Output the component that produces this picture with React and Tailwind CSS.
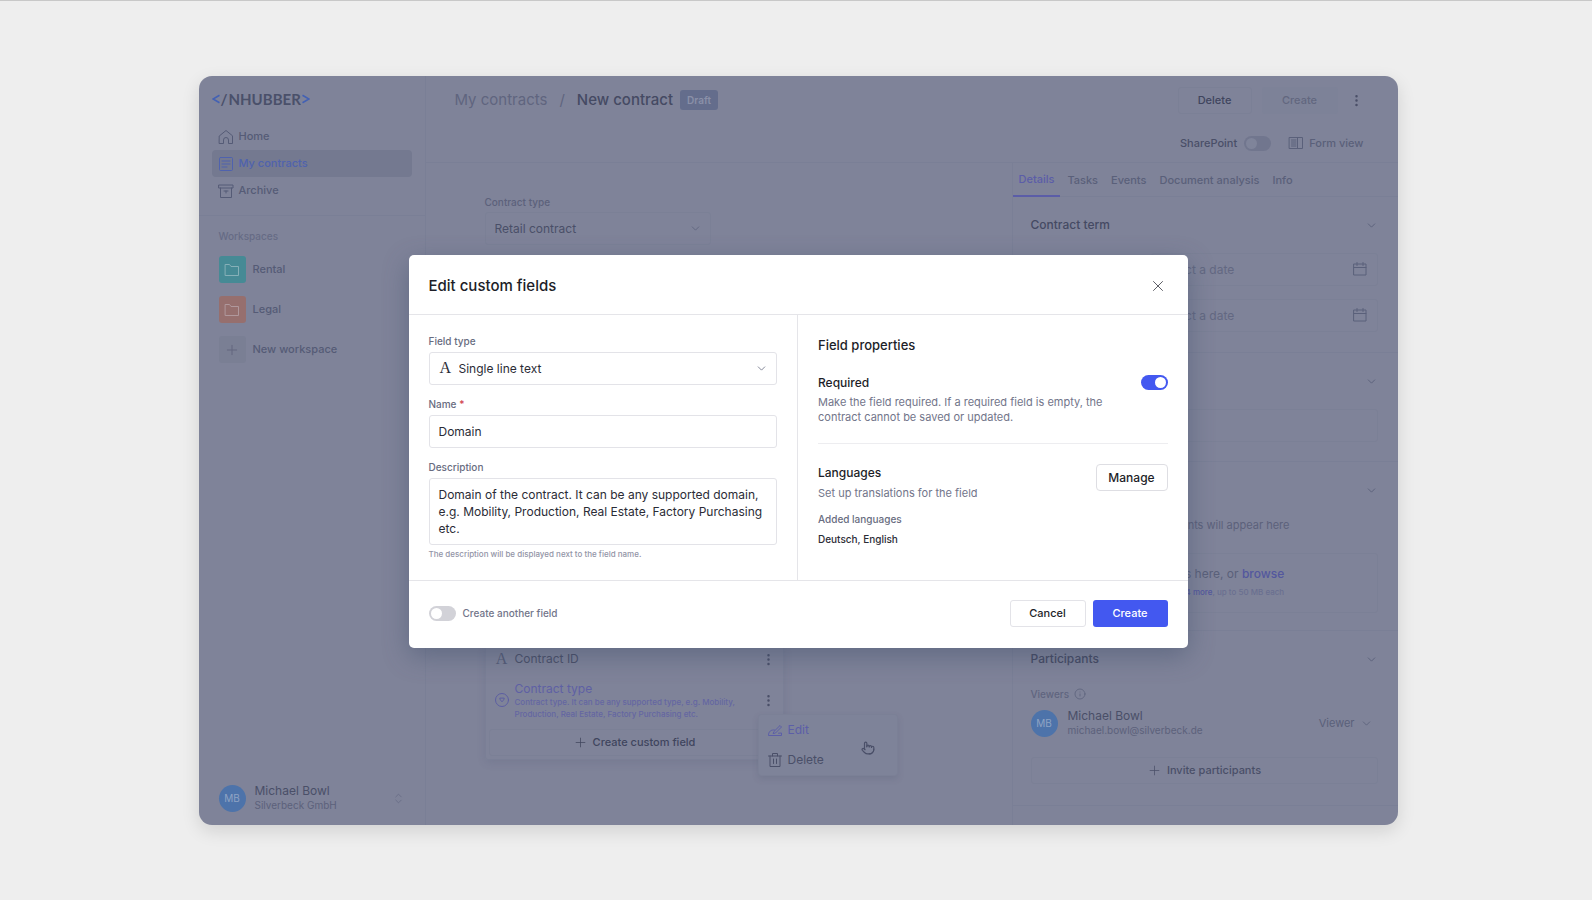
import React from "react";
import { ChevronDown, ChevronsUpDown, Info, MoreVertical, Plus, Pointer, X } from "lucide-react";
import clsx from "clsx";

const svgProps = {
  viewBox: "0 0 16 16",
  fill: "none",
  stroke: "currentColor",
  strokeLinecap: "round",
  strokeLinejoin: "round",
  "aria-hidden": true,
};

function HomeIcon() {
  return (
    <svg {...svgProps} className="size-4">
      <path d="M1.5 6.8 8 1.5l6.5 5.3V14.5H10.5V11a2.5 2.5 0 0 0-5 0v3.5h-4z" />
    </svg>
  );
}

function ContractIcon() {
  return (
    <svg {...svgProps} className="size-4">
      <rect x="1.5" y="1.5" width="13" height="13" rx="1" />
      <path d="M4 5h8M4 8h8M4 11h5" />
    </svg>
  );
}

function ArchiveIcon() {
  return (
    <svg {...svgProps} className="size-4">
      <path d="M1 2h14v3H1zM2.5 5v9.5h11V5M6 8h4M8 8v2" />
    </svg>
  );
}

function FolderIcon() {
  return (
    <svg {...svgProps} className="size-4">
      <path d="M1.5 2.5h4l1.5 2h7.5v9h-13z" />
    </svg>
  );
}

function FormViewIcon() {
  return (
    <svg {...svgProps} className="size-4">
      <rect x="1.5" y="2.5" width="13" height="11" />
      <path d="M9.5 2.5v11M3.5 5H8M3.5 7H8M3.5 9H8M3.5 11H8" />
    </svg>
  );
}

function CalendarIcon() {
  return (
    <svg {...svgProps} className="size-4">
      <path d="M2 3h12v11H2zM2 6.5h12M5 1.5v3M11 1.5v3" />
    </svg>
  );
}

function DropdownTypeIcon() {
  return (
    <svg {...svgProps} className="size-4">
      <circle cx="8" cy="8" r="6.5" />
      <path d="M5.8 6.5c0 1.2 1.2 2 2.2 3.3 1-1.3 2.2-2.1 2.2-3.3z" />
    </svg>
  );
}

function EditIcon() {
  return (
    <svg {...svgProps} className="size-4">
      <path d="M7 9.5 13 3.5l1.5 1.5-6 6-2 .5zM7.5 8C4 7.5 1.5 9.5 1.5 13.5h13V11l-3 .2" />
    </svg>
  );
}

function TrashIcon() {
  return (
    <svg {...svgProps} className="size-4">
      <path d="M1.5 4h13M3 4v10.5h10V4M5.5 4V1.5h5V4M6.5 7v4.5M9.5 7v4.5" />
    </svg>
  );
}

function LetterIcon({ className }) {
  return (
    <span aria-hidden="true" className={clsx("font-['Liberation_Serif',serif] text-base leading-4", className)}>
      A
    </span>
  );
}

function LogoBracket({ flip }) {
  return (
    <svg viewBox="0 0 8 10" fill="none" stroke="#4361b4" strokeWidth="1.6" aria-hidden="true" className="h-[10px] w-2">
      <path d={flip ? "M.5 1.2 7 5 .5 8.8" : "M7.5 1.2 1 5l6.5 3.8"} />
    </svg>
  );
}

function Toggle({ id, muted, ...props }) {
  return (
    <input
      id={id}
      type="checkbox"
      className={clsx(
        "relative h-[15px] w-[27px] shrink-0 appearance-none rounded-full before:absolute before:top-[2px] before:left-[2px] before:size-[11px] before:rounded-full checked:before:left-[14px]",
        muted ? "bg-[#71768e] before:bg-[#7f849a]" : "bg-[#d2d2d8] before:bg-white checked:bg-[#4358f0]"
      )}
      {...props}
    />
  );
}

const navItems = [
  { label: "Home", icon: HomeIcon },
  { label: "My contracts", icon: ContractIcon, active: true },
  { label: "Archive", icon: ArchiveIcon },
];

const workspaces = [
  { label: "Rental", color: "bg-[#468a95] text-[#86b0b8]" },
  { label: "Legal", color: "bg-[#966f6e] text-[#b0989c]" },
];

function Avatar() {
  return (
    <span className="grid size-[27px] shrink-0 place-items-center rounded-full bg-[#4d73aa] text-[10px] text-[#8fa3c4]">
      MB
    </span>
  );
}

function Sidebar() {
  return (
    <aside className="flex w-[227px] shrink-0 flex-col border-r border-[#7a7f96]">
      <a
        href="#home"
        className="mt-[14px] ml-[13px] flex items-center gap-px font-[Lato,sans-serif] text-[15px] leading-[18px] font-bold text-[#4a506a]"
      >
        <LogoBracket />
        <span>/</span>
        <span>NHUBBER</span>
        <LogoBracket flip />
      </a>
      <nav className="mt-[15px] px-[13px]">
        {navItems.map(({ label, icon: Icon, active }) => (
          <a
            key={label}
            href={`#${label}`}
            className={clsx(
              "flex h-[27px] w-[200px] items-center gap-[5px] rounded-sm pl-[6px] text-[11px] font-medium",
              active ? "bg-[#747990] text-[#4f62ae]" : "text-[#555b76]"
            )}
          >
            <Icon />
            {label}
          </a>
        ))}
      </nav>
      <div className="mt-[11px] border-t border-[#7a7f96] px-5 pt-[12px]">
        <h2 className="text-[10px] leading-4 font-medium text-[#666b85]">Workspaces</h2>
        <ul className="mt-[12px] flex flex-col gap-[13px] text-[11px] font-medium text-[#555b76]">
          {workspaces.map(({ label, color }) => (
            <li key={label}>
              <a href={`#${label}`} className="flex items-center gap-[7px]">
                <span className={clsx("grid size-[27px] place-items-center rounded-[3px]", color)}>
                  <FolderIcon />
                </span>
                {label}
              </a>
            </li>
          ))}
          <li>
            <button type="button" className="flex items-center gap-[7px]">
              <span className="grid size-[27px] place-items-center rounded-[3px] bg-[#7a7f94] text-[#62677f]">
                <Plus size={16} strokeWidth={1.5} />
              </span>
              New workspace
            </button>
          </li>
        </ul>
      </div>
      <button type="button" className="mt-auto mb-3 flex items-center gap-[9px] pr-5 pl-5 text-left">
        <Avatar />
        <span className="flex-1 text-[#4a4f68]">
          <span className="block text-xs leading-[15px]">Michael Bowl</span>
          <span className="block text-[10px] leading-[15px] text-[#5c617b]">Silverbeck GmbH</span>
        </span>
        <ChevronsUpDown size={13} strokeWidth={1.5} className="text-[#666b85]" />
      </button>
    </aside>
  );
}

function Header() {
  return (
    <header className="border-b border-[#7a7f96] pr-[34px] pl-[29px]">
      <div className="flex h-12 items-center">
        <h1 className="flex items-center text-[15px] font-medium text-[#454a63]">
          <a href="#contracts" className="font-normal text-[#60657f]">My contracts</a>
          <span className="mx-3 font-normal text-[#60657f]">/</span>
          New contract
        </h1>
        <span className="ml-[7px] rounded-[3px] bg-[#646d8c] px-[7px] text-[10px] leading-5 font-semibold text-[#8a90a8]">
          Draft
        </span>
        <div className="ml-auto flex items-center text-[11px] font-medium">
          <button type="button" className="h-[27px] w-[74px] rounded-[3px] border border-[#7b8096] text-[#40455e]">
            Delete
          </button>
          <button type="button" disabled className="ml-[10px] h-[27px] w-[76px] rounded-[3px] bg-[#7d8298] text-[#62677f]">
            Create
          </button>
          <button type="button" aria-label="More actions" className="ml-[11px] text-[#4a4f68]">
            <MoreVertical size={15} />
          </button>
        </div>
      </div>
      <div className="flex h-[38px] items-center justify-end text-[11px] font-medium">
        <label htmlFor="sharepoint" className="mr-[7px] text-[#4a4f68]">SharePoint</label>
        <Toggle id="sharepoint" muted />
        <button type="button" className="ml-[17px] flex items-center gap-[5px] text-[#5a607a]">
          <FormViewIcon />
          Form view
        </button>
      </div>
    </header>
  );
}

function FieldPicker() {
  return (
    <div className="relative mt-[398px] w-[299px] rounded-[3px] border border-[#7a7f96] shadow-[0_3px_8px_rgba(60,65,95,0.12)]">
      <ul className="text-xs text-[#4a4f68]">
        <li className="flex h-[30px] items-center pr-[7px] pl-2">
          <LetterIcon className="w-4 text-center text-[#555b76]" />
          <span className="ml-[5px] flex-1">Contract ID</span>
          <button type="button" aria-label="Contract ID options"><MoreVertical size={15} /></button>
        </li>
        <li className="flex h-[52px] items-center pr-[7px] pl-2">
          <span className="text-[#5c5ea2]"><DropdownTypeIcon /></span>
          <span className="ml-[5px] flex-1 text-[#5e60a4]">
            <span className="block leading-[15px]">Contract type</span>
            <span className="block text-[8px] leading-[12px] font-medium text-[#6466a2]">
              Contract type. It can be any supported type, e.g. Mobility, Production, Real Estate, Factory Purchasing etc.
            </span>
          </span>
          <button type="button" aria-label="Contract type options"><MoreVertical size={15} /></button>
        </li>
      </ul>
      <button
        type="button"
        className="m-[3px] flex h-[27px] w-[291px] items-center justify-center gap-[5px] rounded-[3px] border border-[#7b8096] text-[11px] font-medium text-[#40455e]"
      >
        <Plus size={15} strokeWidth={1.2} />
        Create custom field
      </button>
      <div className="absolute top-[70px] left-[272px] w-[140px] rounded-[3px] border border-[#7b8096] bg-[#7e8399] text-xs text-[#4a4f68] shadow-[0_3px_6px_rgba(60,65,95,0.15)]">
        <button type="button" className="flex h-[30px] w-full items-center gap-[5px] pl-2 text-[#5c5ea8]">
          <EditIcon />
          Edit
        </button>
        <button type="button" className="flex h-[30px] w-full items-center gap-[5px] pl-2">
          <TrashIcon />
          Delete
        </button>
        <Pointer size={14} strokeWidth={2} className="absolute top-[26px] left-[102px] text-[#4a4f68]" />
      </div>
    </div>
  );
}

function ContractForm() {
  return (
    <section className="min-w-0 flex-1 pl-[59px]">
      <label htmlFor="contract-type" className="mt-[31px] block text-[10px] leading-4 font-medium text-[#5c617b]">
        Contract type
      </label>
      <div className="relative mt-[2px] w-[226px]">
        <select
          id="contract-type"
          className="h-[33px] w-full appearance-none rounded-[3px] border border-[#7b8096] px-[9px] text-xs text-[#4a4f68]"
        >
          <option>Retail contract</option>
        </select>
        <ChevronDown size={13} strokeWidth={1.5} className="pointer-events-none absolute top-[10px] right-[9px] text-[#5c617b]" />
      </div>
      <FieldPicker />
    </section>
  );
}

function Section({ title, className, children }) {
  return (
    <section className={clsx("border-b border-[#7a7f96] pr-5 pl-[18px]", className)}>
      <div className="flex h-[56px] items-center">
        <h2 className="flex-1 text-xs font-medium text-[#454a63]">{title}</h2>
        <button type="button" aria-label="Toggle section" className="text-[#555b76]">
          <ChevronDown size={13} strokeWidth={1.5} />
        </button>
      </div>
      {children}
    </section>
  );
}

function DateInput({ label }) {
  return (
    <div className="relative ml-[120px]">
      <input
        aria-label={label}
        placeholder="Select a date"
        className="block h-[33px] w-full rounded-[3px] border border-[#7b8096] px-[9px] text-xs placeholder:text-[#636882]"
      />
      <span className="absolute top-2 right-[10px] text-[#5a607a]">
        <CalendarIcon />
      </span>
    </div>
  );
}

const tabs = ["Details", "Tasks", "Events", "Document analysis", "Info"];

function DetailsPanel() {
  return (
    <aside className="w-[386px] shrink-0 border-l border-[#7a7f96]">
      <nav className="flex h-[34px] gap-px border-b border-[#7a7f96] text-[11px] font-medium text-[#5a607a]">
        {tabs.map((tab, i) => (
          <a
            key={tab}
            href={`#${tab}`}
            className={clsx("flex h-[34px] items-center px-[6px]", i === 0 && "border-b-2 border-[#5b5da8] text-[#5b5da8]")}
          >
            {tab}
          </a>
        ))}
      </nav>
      <Section title="Contract term" className="h-[156px]">
        <div className="flex flex-col gap-[13px]">
          <DateInput label="Start date" />
          <DateInput label="End date" />
        </div>
      </Section>
      <Section className="h-[109px]">
        <input aria-label="Tags" className="block h-[33px] w-full rounded-[3px] border border-[#7b8096] px-[9px]" />
      </Section>
      <Section className="h-[169px]">
        <p className="text-center text-[11px] leading-[14px] text-[#5c617b]">Your documents will appear here</p>
        <div className="mt-[21px] rounded-[3px] border border-[#7b8096] py-3 text-center">
          <p className="text-xs leading-4 text-[#5a607a]">
            Upload files here, or <button type="button" className="font-medium text-[#53579e]">browse</button>
          </p>
          <p className="mt-[2px] text-[8px] leading-4 font-medium text-[#6a6f90]">
            PDF, DOCX and <span className="text-[#53579e]">4 more</span>, up to 50 MB each
          </p>
        </div>
      </Section>
      <Section title="Participants" className="h-[175px]">
        <h3 className="flex items-center gap-[5px] text-[10px] leading-[14px] font-medium text-[#60657f]">
          Viewers
          <Info size={12} strokeWidth={1.8} />
        </h3>
        <div className="mt-[7px] flex items-center">
          <Avatar />
          <div className="ml-[10px] flex-1">
            <p className="text-xs leading-[15px] text-[#4a4f68]">Michael Bowl</p>
            <p className="text-[10px] leading-[15px] text-[#5c617b]">michael.bowl@silverbeck.de</p>
          </div>
          <button type="button" className="mr-[5px] flex items-center gap-[5px] text-[11px] text-[#5a607a]">
            Viewer
            <ChevronDown size={13} strokeWidth={1.5} />
          </button>
        </div>
        <button
          type="button"
          className="mt-[19px] flex h-[27px] w-full items-center justify-center gap-[5px] rounded-[3px] border border-[#7b8096] text-[11px] font-medium text-[#4a4f68]"
        >
          <Plus size={15} strokeWidth={1.2} />
          Invite participants
        </button>
      </Section>
    </aside>
  );
}

const labelClass = "block text-[10px] leading-[15px] font-medium text-[#686c80]";
const fieldClass = "block w-full rounded-[3px] border border-[#e3e3e8] bg-white text-xs text-[#2b2c36]";

function EditFieldsModal() {
  return (
    <div
      role="dialog"
      aria-labelledby="modal-title"
      className="w-[779px] rounded-[5px] bg-white shadow-[0_8px_26px_rgba(60,75,105,0.45)]"
    >
      <div className="flex h-[60px] items-center justify-between border-b border-[#e5e5e9] px-5 pt-[2px]">
        <h2 id="modal-title" className="text-[15px] leading-5 font-medium text-[#1d1e28]">Edit custom fields</h2>
        <button type="button" aria-label="Close" className="mr-px text-[#4b4c55]">
          <X size={18} strokeWidth={1.2} />
        </button>
      </div>
      <div className="grid grid-cols-2 border-b border-[#e5e5e9]">
        <div className="border-r border-[#e5e5e9] px-5 pt-[19px] pb-[19px]">
          <label htmlFor="field-type" className={labelClass}>Field type</label>
          <div className="relative mt-[3px]">
            <select id="field-type" className={clsx(fieldClass, "h-[33px] appearance-none pl-[29px]")}>
              <option>Single line text</option>
            </select>
            <LetterIcon className="absolute top-2 left-[11px] text-[#2b2c36]" />
            <ChevronDown size={13} strokeWidth={1.5} className="pointer-events-none absolute top-[10px] right-[9px] text-[#686c80]" />
          </div>
          <label htmlFor="name" className={clsx(labelClass, "mt-3")}>
            Name <span className="text-[#d0404c]">*</span>
          </label>
          <input id="name" defaultValue="Domain" className={clsx(fieldClass, "mt-[3px] h-[33px] px-[9px]")} />
          <label htmlFor="description" className={clsx(labelClass, "mt-3")}>Description</label>
          <textarea
            id="description"
            rows={3}
            defaultValue="Domain of the contract. It can be any supported domain, e.g. Mobility, Production, Real Estate, Factory Purchasing etc."
            className={clsx(fieldClass, "mt-[3px] resize-none px-[9px] py-[7px] leading-[17px]")}
          />
          <p className="mt-[2px] text-[8px] leading-[14px] font-medium text-[#9294a6]">
            The description will be displayed next to the field name.
          </p>
        </div>
        <div className="px-5 pt-[21px]">
          <h3 className="text-[13px] leading-[18px] font-medium text-[#1d1e28]">Field properties</h3>
          <div className="mt-[21px] flex items-start justify-between border-b border-[#ededf0] pb-[18px]">
            <div>
              <label htmlFor="required" className="block text-xs leading-4 font-medium text-[#1d1e28]">Required</label>
              <p className="mt-1 max-w-[290px] text-[11px] leading-[15px] text-[#72758a]">
                Make the field required. If a required field is empty, the contract cannot be saved or updated.
              </p>
            </div>
            <Toggle id="required" defaultChecked />
          </div>
          <div className="mt-[20px] flex items-start justify-between">
            <div>
              <h4 className="text-xs leading-[18px] font-medium text-[#1d1e28]">Languages</h4>
              <p className="mt-[2px] text-[11px] leading-[18px] text-[#72758a]">Set up translations for the field</p>
            </div>
            <button type="button" className="h-[27px] w-[72px] rounded-[4px] border border-[#dedee3] text-xs font-medium text-[#1d1e28]">
              Manage
            </button>
          </div>
          <h5 className="mt-[10px] text-[10px] leading-[15px] font-medium text-[#686c80]">Added languages</h5>
          <p className="mt-[5px] text-[10px] leading-[15px] font-medium text-[#2b2c36]">Deutsch, English</p>
        </div>
      </div>
      <div className="flex h-[67px] items-center px-5 pb-[2px]">
        <Toggle id="another" />
        <label htmlFor="another" className="ml-[7px] flex-1 text-[10px] font-medium text-[#72758a]">
          Create another field
        </label>
        <button type="button" className="h-[27px] w-[76px] rounded-[3px] border border-[#e3e3e8] text-[11px] font-medium text-[#1d1e28]">
          Cancel
        </button>
        <button type="button" className="ml-[7px] h-[27px] w-[75px] rounded-[3px] bg-[#4358f0] text-[11px] font-medium text-white">
          Create
        </button>
      </div>
    </div>
  );
}

export default function App() {
  return (
    <div className="flex min-h-screen items-center justify-center border-t border-[#c8c8c8] bg-[#eeeeee] pl-1 font-[Inter,sans-serif]">
      <div className="relative flex min-h-[749px] w-full max-w-[1199px] overflow-clip rounded-[13px] bg-[#7f8399] shadow-[0_6px_18px_rgba(0,0,0,0.12)]">
        <Sidebar />
        <main className="flex min-w-0 flex-1 flex-col">
          <Header />
          <div className="flex flex-1">
            <ContractForm />
            <DetailsPanel />
          </div>
        </main>
        <div className="absolute inset-0 grid place-items-center pt-[2px]">
          <EditFieldsModal />
        </div>
      </div>
    </div>
  );
}
